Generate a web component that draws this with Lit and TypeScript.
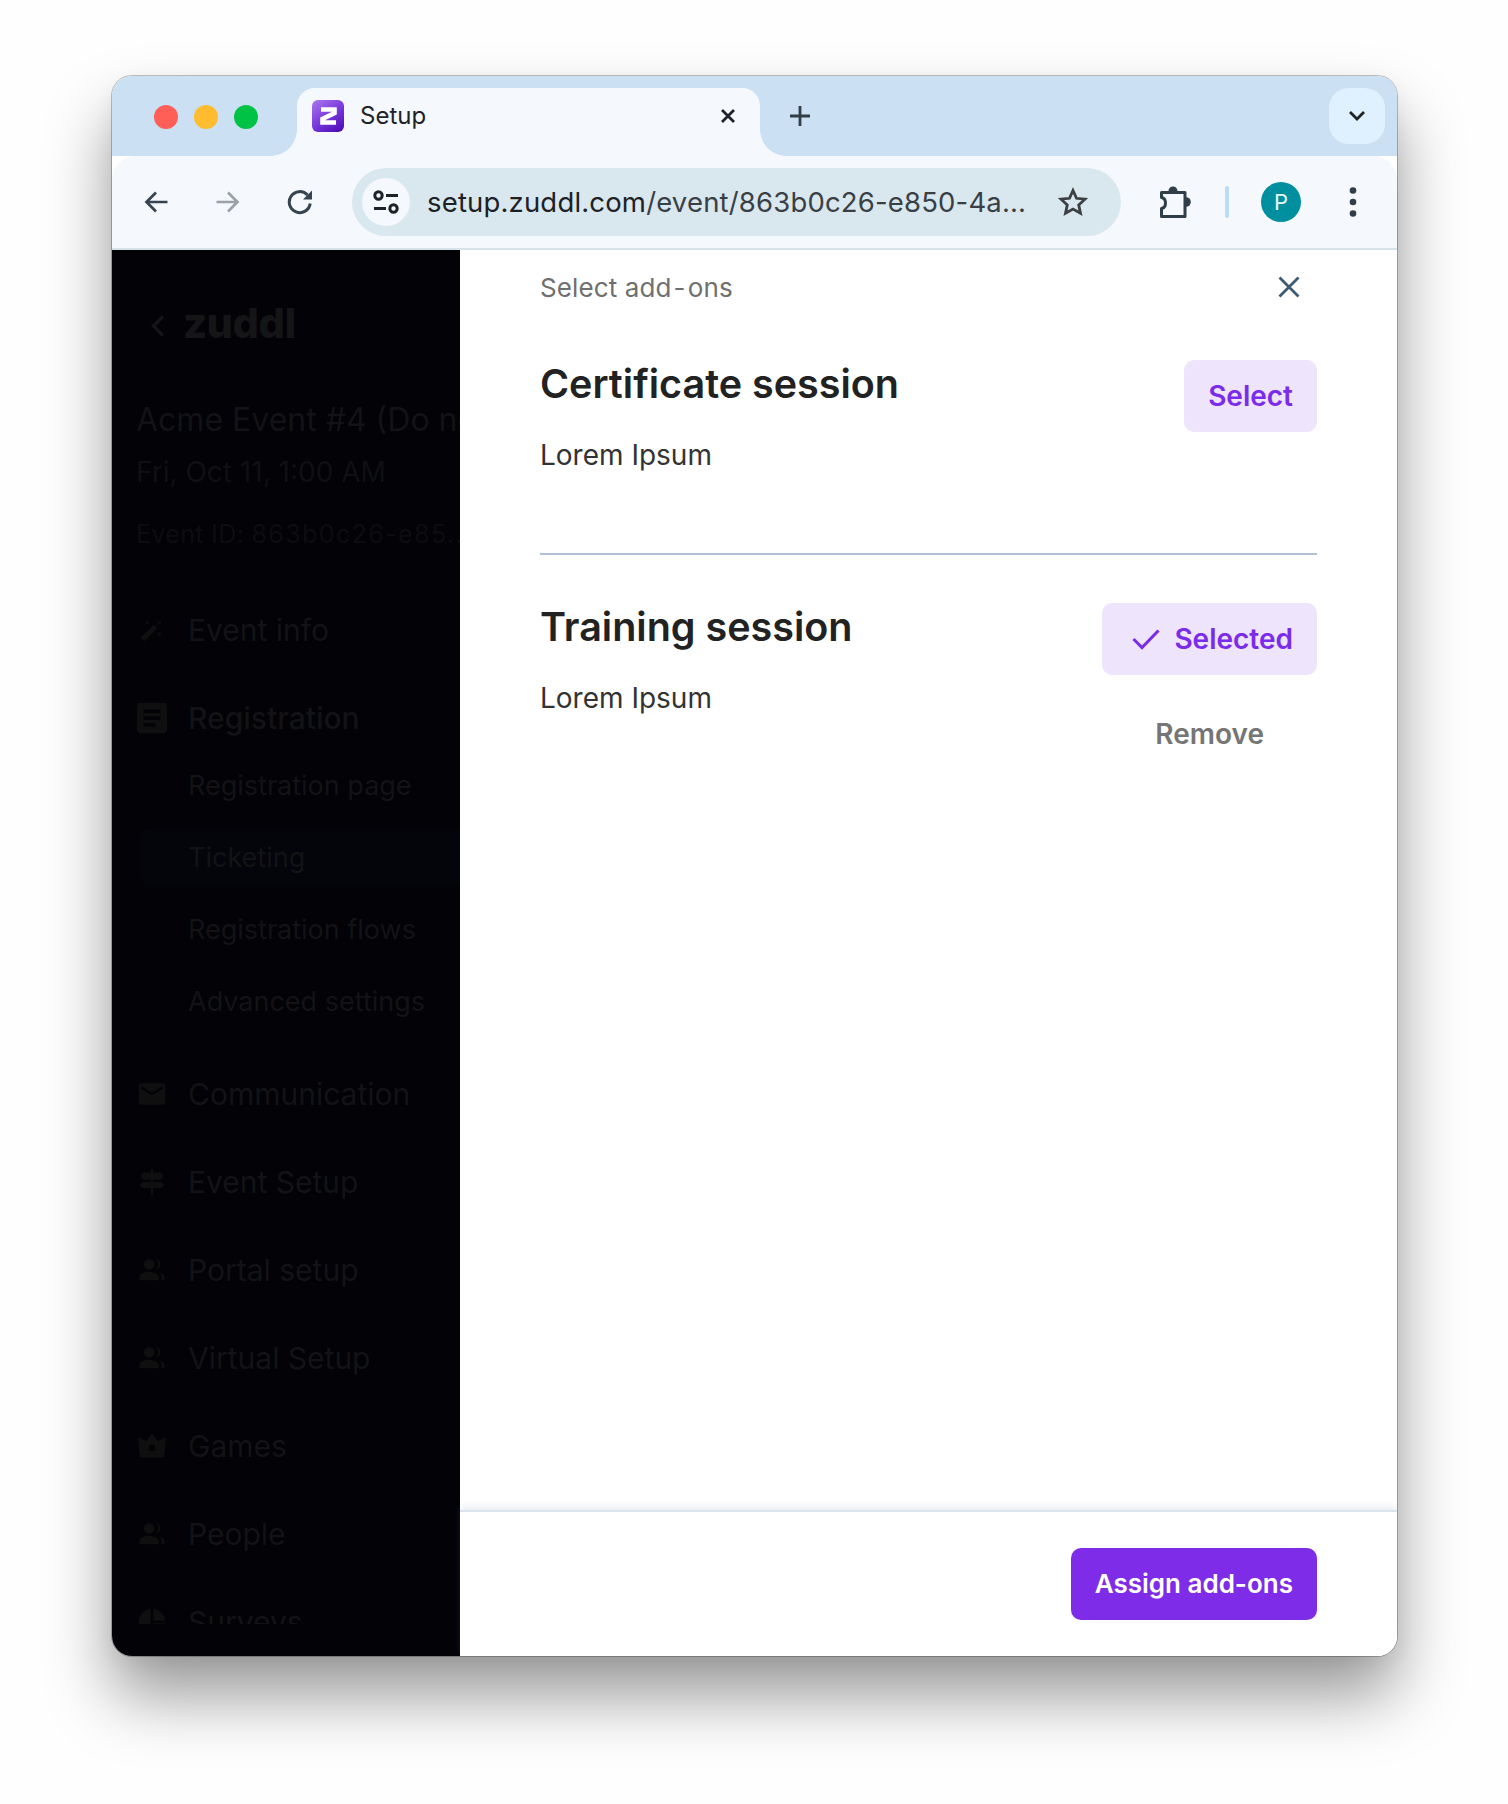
import { LitElement, html, css, svg } from "lit";
import { customElement } from "lit/decorators.js";

const people = svg`<path d="M9.500 11.500a4.600 4.600 0 100-9.200 4.600 4.600 0 000 9.200zM9.500 13.500C5.600 13.500 1 15.400 1 18.200V21h17v-2.800c0-2.800-4.600-4.700-8.500-4.700z"/><path d="M14.500 2.400c1.900.6 3.200 2.400 3.200 4.500s-1.300 3.900-3.200 4.500c2.800 0 5-2 5-4.500s-2.200-4.500-5-4.500zM17.500 13.900c1.700 1 2.800 2.500 2.800 4.300V21H23v-2.800c0-2.200-2.500-3.700-5.500-4.300z"/>`;

type NavItem = { label: string; icon: ReturnType<typeof svg>; box: string };

const ICONS = {
  wand: svg`<path d="M7.500 5.600L10 7 8.600 4.500 10 2 7.500 3.400 5 2l1.400 2.500L5 7zm12 9.800L17 14l1.400 2.500L17 19l2.500-1.400L22 19l-1.400-2.500L22 14zM22 2l-2.500 1.400L17 2l1.400 2.500L17 7l2.500-1.400L22 7l-1.400-2.500zm-7.630 5.290a.996.996 0 00-1.410 0L1.290 18.960a.996.996 0 000 1.410l2.340 2.340c.39.39 1.020.39 1.410 0L16.700 11.050a.996.996 0 000-1.410l-2.330-2.350z"/>`,
  form: svg`<path d="M19 3H5c-1.100 0-2 .9-2 2v14c0 1.100.9 2 2 2h14c1.100 0 2-.9 2-2V5c0-1.100-.9-2-2-2zm-5 14H7v-2h7v2zm3-4H7v-2h10v2zm0-4H7V7h10v2z"/>`,
  mail: svg`<path d="M20 4H4c-1.100 0-1.990.9-1.990 2L2 18c0 1.100.9 2 2 2h16c1.100 0 2-.9 2-2V6c0-1.100-.9-2-2-2zm0 4l-8 5-8-5V6l8 5 8-5v2z"/>`,
  sign: svg`<path d="M11 1h2v3h6a2 2 0 012 2v2a2 2 0 01-2 2h-6v2h7l2.500 2.500L20 17h-7v6h-2v-6H4l-2.500-2.500L4 12h7v-2H5a2 2 0 01-2-2V6a2 2 0 012-2h6z"/>`,
  people,
  crown: svg`<path fill-rule="evenodd" d="M12 2l4.500 6L23 5l-1.500 16h-19L1 5l6.500 3zM12 11a2.500 2.500 0 100 5 2.500 2.500 0 000-5z"/>`,
  pie: svg`<path d="M11 2v20C5.900 21.500 2 17.200 2 12S5.900 2.500 11 2zM13 2v9h9c-.5-4.700-4.300-8.500-9-9zM13 13v9c4.700-.5 8.500-4.300 9-9z"/>`,
};

const TOP: NavItem[] = [
  { label: "Communication", icon: ICONS.mail, box: "0 0 24 24" },
  { label: "Event Setup", icon: ICONS.sign, box: "-1.500 -1.500 27 27" },
  { label: "Portal setup", icon: ICONS.people, box: "-2 -2 28 28" },
  { label: "Virtual Setup", icon: ICONS.people, box: "-2 -2 28 28" },
  { label: "Games", icon: ICONS.crown, box: "-.5 -.5 25 25" },
  { label: "People", icon: ICONS.people, box: "-2 -2 28 28" },
  { label: "Surveys", icon: ICONS.pie, box: "0 0 24 24" },
];

@customElement("app-root")
export class AppRoot extends LitElement {
  static styles = css`
    :host {
      display: block;
      width: 1508px;
      height: 1804px;
      padding: 76px 112px 0;
      box-sizing: border-box;
      background: #fefefe;
      font-family: Inter, "Liberation Sans", sans-serif;
      overflow: hidden;
    }
    * { box-sizing: border-box; }
    svg { display: block; flex: none; }
    .window {
      width: 1285px;
      height: 1580px;
      border-radius: 20px;
      overflow: hidden;
      display: flex;
      flex-direction: column;
      background: #fff;
      box-shadow: 0 0 0 1px rgba(0, 0, 0, 0.24), 0 40px 66px rgba(0, 0, 0, 0.4), 0 6px 20px rgba(0, 0, 0, 0.05);
    }
    .strip {
      height: 80px;
      flex: none;
      background: #cbe0f3;
      display: flex;
      align-items: flex-end;
      padding-left: 42px;
      padding-right: 12px;
    }
    .lights {
      display: flex;
      gap: 16px;
      align-self: flex-start;
      margin-top: 29px;
      width: 143px;
    }
    .lights i { width: 24px; height: 24px; border-radius: 50%; display: block; }
    .tab {
      position: relative;
      width: 463px;
      height: 68px;
      background: #f5f8fd;
      border-radius: 18px 18px 0 0;
      display: flex;
      align-items: flex-start;
      padding: 12px 24px 0 15px;
    }
    .tab::before, .tab::after {
      content: "";
      position: absolute;
      bottom: 0;
      width: 26px;
      height: 26px;
    }
    .tab::before { left: -26px; background: radial-gradient(circle at 0 0, transparent 25.500px, #f5f8fd 26px); }
    .tab::after { right: -26px; background: radial-gradient(circle at 100% 0, transparent 25.500px, #f5f8fd 26px); }
    .fav {
      width: 32px;
      height: 32px;
      border-radius: 6px;
      background: linear-gradient(145deg, #ab78ee 0%, #7a3bdc 50%, #4706b0 100%);
    }
    .tab-title { margin-left: 16px; font-size: 24px; line-height: 32px; color: #1f2328; flex: 1; }
    .tab-x { margin-top: 8px; }
    .plus { margin-left: 29px; margin-bottom: 29px; }
    .drop {
      margin-left: auto;
      align-self: flex-start;
      margin-top: 12px;
      width: 56px;
      height: 56px;
      border-radius: 20px;
      background: #dff0fe;
      display: flex;
      align-items: center;
      justify-content: center;
    }
    .toolbar {
      height: 94px;
      flex: none;
      position: relative;
      background: #f5f8fd;
      border-radius: 24px 24px 0 0;
      border-bottom: 2px solid #d6e2ea;
      display: flex;
      align-items: center;
      padding: 0 0 0 32px;
    }
    .nav-ic { width: 24px; margin-right: 48px; }
    .nav-re { width: 26px; margin-left: -1px; margin-right: 47px; }
    .omni {
      width: 769px;
      margin-left: -8px;
      height: 68px;
      border-radius: 34px;
      background: #d9e7ee;
      display: flex;
      align-items: center;
      padding-left: 10px;
    }
    .tune {
      width: 48px;
      height: 48px;
      border-radius: 50%;
      background: #f5f8fd;
      display: flex;
      align-items: center;
      justify-content: center;
      flex: none;
    }
    .url {
      margin-left: 17px;
      font-size: 27.500px;
      letter-spacing: 0.17px;
      color: #3a3f45;
      white-space: nowrap;
      width: 598px;
    }
    .url b { font-weight: 400; color: #1d2125; }
    .star { margin-left: 33px; }
    .puzzle { margin-left: 38px; }
    .sep { width: 4px; height: 32px; border-radius: 2px; background: #bcdcf5; margin-left: 34px; }
    .avatar {
      width: 40px;
      height: 40px;
      border-radius: 50%;
      background: #008f9f;
      color: #e8f8fa;
      font-size: 22px;
      display: flex;
      align-items: center;
      justify-content: center;
      margin-left: 32px;
      flex: none;
    }
    .kebab { margin-left: 48px; }
    .body { flex: 1; min-height: 0; display: flex; }
    .side {
      width: 348px;
      flex: none;
      background: #020207;
      color: #131315;
      display: flex;
      flex-direction: column;
      overflow: hidden;
      padding-bottom: 32px;
    }
    .side-in { overflow: hidden; flex: 1; min-height: 0; }
    .logo {
      display: flex;
      align-items: center;
      gap: 18px;
      height: 44px;
      margin: 51px 0 0 37px;
      font-size: 41.500px;
      font-weight: 800;
      letter-spacing: -0.5px;
      color: #151517;
    }
    .logo svg { margin-top: 6px; }
    .ev {
      padding-left: 24px;
      white-space: nowrap;
      overflow: hidden;
    }
    .ev-name { font-size: 32px; line-height: 40px; margin-top: 55px; }
    .ev-date { font-size: 28px; line-height: 32px; margin-top: 16px; color: #101012; }
    .ev-id { font-size: 25px; line-height: 32px; margin-top: 30px; letter-spacing: 0.33px; color: #0d0d0f; }
    .ev-id span { letter-spacing: 1.4px; }
    .row {
      display: flex;
      align-items: center;
      height: 40px;
      padding-left: 24px;
      gap: 20px;
      font-size: 30px;
      white-space: nowrap;
    }
    .row svg { fill: #0f0f10; }
    .row.s { font-weight: 500; }
    .row-list { display: flex; flex-direction: column; gap: 48px; }
    .row-list.first { margin-top: 60px; }
    .sub { display: flex; flex-direction: column; margin: 11px 0 37px; padding-left: 28px; }
    .sub div {
      height: 56px;
      margin: 8px 0;
      padding-left: 48px;
      display: flex;
      align-items: center;
      font-size: 27px;
      white-space: nowrap;
      border-radius: 8px 0 0 8px;
    }
    .sub .on { background: #04040b; }
    .panel {
      flex: 1;
      min-width: 0;
      display: flex;
      flex-direction: column;
      background: #fff;
    }
    .scroll { flex: 1; min-height: 0; padding: 0 80px; }
    .head {
      height: 110px;
      padding: 18px 17px 0 0;
      display: flex;
      justify-content: space-between;
      align-items: flex-start;
    }
    .head span { font-size: 26px; line-height: 40px; letter-spacing: 0.12px; color: #6f6f6f; }
    .head span i { font-style: normal; margin: 0 2px; }
    .head svg { margin-top: 8px; }
    .item { display: flex; justify-content: space-between; align-items: flex-start; }
    .item h2 { margin: 0; font-size: 39.500px; line-height: 48px; font-weight: 600; color: #222; }
    .item p { margin: 27px 0 0; font-size: 28px; line-height: 40px; color: #333; }
    .divider { height: 2px; background: #b0c1d6; margin: 78px 0 48px; }
    .acts { display: flex; flex-direction: column; align-items: stretch; }
    .btn {
      height: 72px;
      border-radius: 10px;
      border: 0;
      padding: 0 24px 1px;
      font: 600 28px Inter, "Liberation Sans", sans-serif;
      display: flex;
      align-items: center;
      justify-content: center;
      gap: 14px;
      white-space: nowrap;
    }
    .soft { background: #eee4fc; color: #7b2bea; }
    .sel { padding-left: 30px; }
    .rm {
      margin-top: 39px;
      font-weight: 600;
      font-size: 28px;
      line-height: 40px;
      color: #757575;
      text-align: center;
    }
    .foot {
      height: 146px;
      flex: none;
      border-top: 2px solid #dbe3ee;
      box-shadow: 0 -3px 7px rgba(130, 150, 185, 0.18);
      padding: 36px 80px 0 0;
      display: flex;
      justify-content: flex-end;
      align-items: flex-start;
      background: #fff;
      position: relative;
    }
    .primary { background: #7e2ce8; color: #fff; font-size: 26px; }
  `;

  render() {
    return html`
      <div class="window">
        <div class="strip">
          <div class="lights">
            <i style="background:#ff5f57"></i><i style="background:#febc2e"></i><i style="background:#00c244"></i>
          </div>
          <div class="tab">
            <div class="fav">
              <svg width="32" height="32" viewBox="0 0 32 32"><path d="M9 9.500h13.500v3.500L10.500 19v3.500H24" fill="none" stroke="#fff" stroke-width="4.600"/></svg>
            </div>
            <span class="tab-title">Setup</span>
            <svg class="tab-x" width="16" height="16" viewBox="0 0 16 16"><path d="M2 2l12 12M14 2L2 14" stroke="#1f2328" stroke-width="2.800" fill="none"/></svg>
          </div>
          <svg class="plus" width="22" height="22" viewBox="0 0 22 22"><path d="M11 1v20M1 11h20" stroke="#333d45" stroke-width="2.800"/></svg>
          <div class="drop">
            <svg width="18" height="12" viewBox="0 0 18 12"><path d="M2 2l7 7 7-7" fill="none" stroke="#1f2328" stroke-width="2.800"/></svg>
          </div>
        </div>
        <div class="toolbar">
          <svg class="nav-ic" width="24" height="24" viewBox="0 0 24 24"><path d="M23.500 12H2.500M12 2.500L2.500 12l9.500 9.500" fill="none" stroke="#36444f" stroke-width="2.700"/></svg>
          <svg class="nav-ic" width="24" height="24" viewBox="0 0 24 24"><path d="M.5 12h21M12 2.500l9.500 9.500-9.500 9.500" fill="none" stroke="#9ba1a6" stroke-width="2.700"/></svg>
          <svg class="nav-re" width="26" height="26" viewBox="0 0 26 26"><path d="M23.200 14.500A10.500 10.500 0 1 1 20.500 6" fill="none" stroke="#36444f" stroke-width="3"/><path d="M25 1.500v9h-9z" fill="#36444f"/></svg>
          <div class="omni">
            <div class="tune">
              <svg width="26" height="24" viewBox="0 0 26 24"><circle cx="5.500" cy="5.500" r="3.700" fill="none" stroke="#1d2228" stroke-width="3"/><path d="M13 5.500h12M1 18.500h12" stroke="#1d2228" stroke-width="3"/><circle cx="20.500" cy="18.500" r="3.700" fill="none" stroke="#1d2228" stroke-width="3"/></svg>
            </div>
            <span class="url"><b>setup.zuddl.com</b>/event/863b0c26-e850-4a...</span>
            <svg class="star" width="30" height="30" viewBox="0 0 30 30"><path d="M15 3.500l3.500 7.800 8.500.9-6.300 5.700 1.800 8.400L15 22.100l-7.500 4.200 1.800-8.400L3 12.200l8.500-.9z" fill="none" stroke="#3c4043" stroke-width="2.800" stroke-linejoin="miter"/></svg>
          </div>
          <svg class="puzzle" width="32" height="32" viewBox="0 0 32 32"><circle cx="14" cy="5" r="4.500" fill="#2f3e48"/><circle cx="27" cy="16" r="4.800" fill="#2f3e48"/><path d="M2.500 6.500H26V30.500H2.500V22.500c2.500-.5 4-3 4-5.500s-1.500-5-4-5.500z" fill="#f5f8fd" stroke="#2f3e48" stroke-width="3" stroke-linejoin="round"/></svg>
          <div class="sep"></div>
          <div class="avatar">P</div>
          <svg class="kebab" width="8" height="32" viewBox="0 0 8 32"><circle cx="4" cy="4.500" r="3.300" fill="#2f3e48"/><circle cx="4" cy="16" r="3.300" fill="#2f3e48"/><circle cx="4" cy="27.500" r="3.300" fill="#2f3e48"/></svg>
        </div>
        <div class="body">
          <aside class="side">
            <div class="side-in">
              <div class="logo">
                <svg width="16" height="24" viewBox="0 0 16 24"><path d="M14 2.500L4.500 12l9.500 9.500" fill="none" stroke="#151517" stroke-width="3.500"/></svg>
                <span>zuddl</span>
              </div>
              <div class="ev ev-name">Acme Event #4 (Do not use)</div>
              <div class="ev ev-date">Fri, Oct 11, 1:00 AM</div>
              <div class="ev ev-id">Event ID: <span>863b0c26-e85...</span></div>
              <div class="row-list first">
                <div class="row"><svg width="32" height="32" viewBox="-4 -4 32 32">${ICONS.wand}</svg>Event info</div>
                <div class="row s"><svg width="32" height="32" viewBox="2.500 2.500 19 19">${ICONS.form}</svg>Registration</div>
              </div>
              <div class="sub">
                <div>Registration page</div>
                <div class="on">Ticketing</div>
                <div>Registration flows</div>
                <div>Advanced settings</div>
              </div>
              <div class="row-list">
                ${TOP.map((t) => html`<div class="row"><svg width="32" height="32" viewBox=${t.box}>${t.icon}</svg>${t.label}</div>`)}
              </div>
            </div>
          </aside>
          <section class="panel">
            <div class="scroll">
              <div class="head">
                <span>Select add<i>-</i>ons</span>
                <svg width="22" height="22" viewBox="0 0 22 22"><path d="M1.500 1.500l19 19M20.500 1.500l-19 19" stroke="#3f5b73" stroke-width="2.800"/></svg>
              </div>
              <div class="item">
                <div><h2>Certificate session</h2><p>Lorem Ipsum</p></div>
                <div class="acts"><button class="btn soft">Select</button></div>
              </div>
              <div class="divider"></div>
              <div class="item">
                <div><h2>Training session</h2><p>Lorem Ipsum</p></div>
                <div class="acts">
                  <button class="btn soft sel">
                    <svg width="28" height="22" viewBox="0 0 28 22"><path d="M1.500 11l8.500 8.500L26.500 2.500" fill="none" stroke="#7b2bea" stroke-width="3"/></svg>
                    Selected
                  </button>
                  <div class="rm">Remove</div>
                </div>
              </div>
            </div>
            <div class="foot"><button class="btn primary">Assign add-ons</button></div>
          </section>
        </div>
      </div>
    `;
  }
}
